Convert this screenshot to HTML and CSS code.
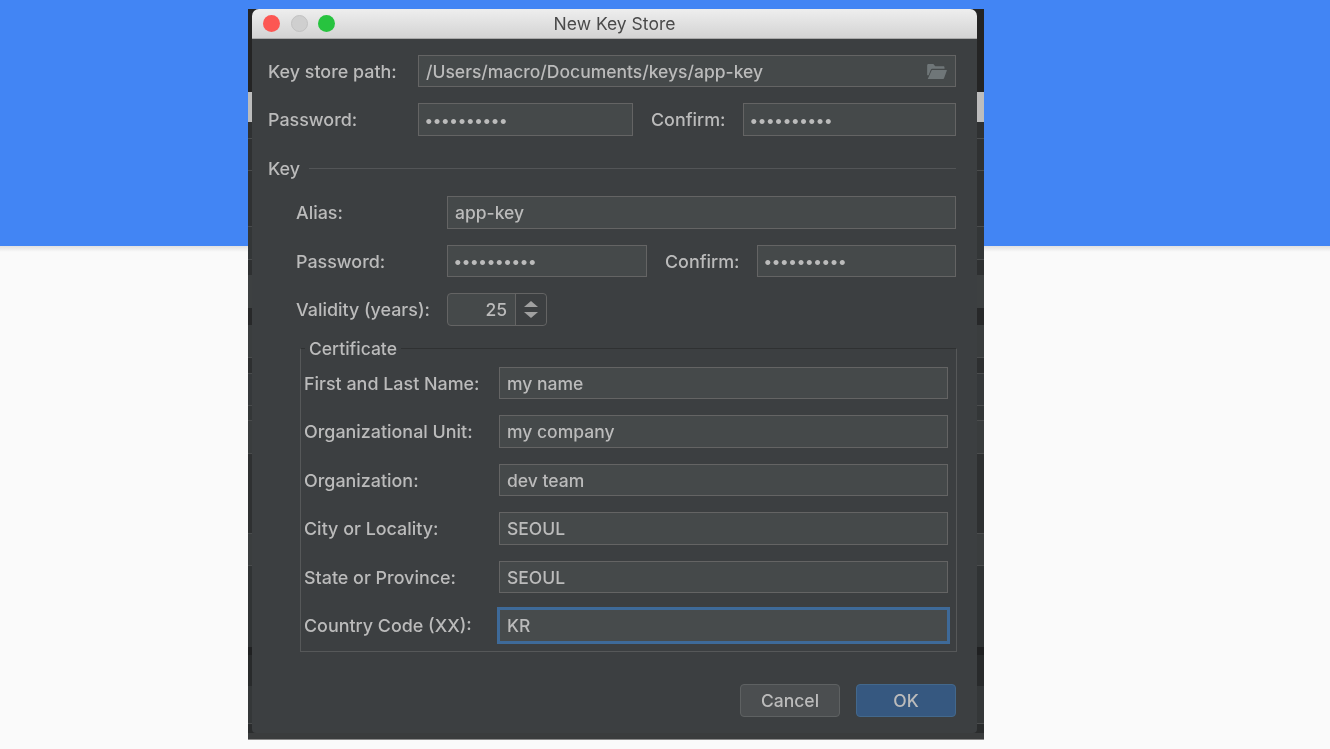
FILE: index.html
```html
<!DOCTYPE html>
<html lang="en">
<head>
    <meta charset="UTF-8">
    <meta name="viewport" content="width=device-width, initial-scale=1.0">
    <title>New Key Store</title>
    <link rel="stylesheet" href="styles.css">
</head>
<body>
    <div class="shot">
        <div class="dialog">
            <div class="titlebar">
                <span class="light red"></span>
                <span class="light grey"></span>
                <span class="light green"></span>
                <span class="title">New Key Store</span>
            </div>

            <div class="content">
                <div class="row store-row">
                    <label>Key store path:</label>
                    <div class="field path-field">
                        <span>/Users/macro/Documents/keys/app-key</span>
                        <svg class="folder" width="20" height="15" viewBox="0 0 21 16">
                            <path d="M0 1.5C0 .7.6 0 1.4 0h5.2l2 2.4h8.6c.8 0 1.3.6 1.3 1.3V5H5.2c-.6 0-1 .3-1.2.8L1.6 12H0z" fill="#6f7678"/>
                            <path d="M5 6.3h15.6c.3 0 .5.3.4.6L18 15.2c-.1.4-.5.8-1 .8H.6z" fill="#6f7678"/>
                        </svg>
                    </div>
                </div>
                <div class="row store-row pass-store">
                    <label>Password:</label>
                    <div class="field dots">••••••••••</div>
                    <label class="confirm">Confirm:</label>
                    <div class="field dots">••••••••••</div>
                </div>

                <div class="key-head">
                    <span>Key</span>
                    <div class="rule"></div>
                </div>

                <div class="key-body">
                    <div class="row key-row">
                        <label>Alias:</label>
                        <div class="field">app-key</div>
                    </div>
                    <div class="row key-row pass-key">
                        <label>Password:</label>
                        <div class="field dots">••••••••••</div>
                        <label class="confirm">Confirm:</label>
                        <div class="field dots">••••••••••</div>
                    </div>
                    <div class="row key-row">
                        <label>Validity (years):</label>
                        <div class="spinner">
                            <div class="spin-value">25</div>
                            <div class="spin-arrows">
                                <span class="arrow-up"></span>
                                <span class="arrow-down"></span>
                            </div>
                        </div>
                    </div>

                    <fieldset class="cert">
                        <legend>Certificate</legend>
                        <div class="row cert-row">
                            <label>First and Last Name:</label>
                            <div class="field">my name</div>
                        </div>
                        <div class="row cert-row">
                            <label>Organizational Unit:</label>
                            <div class="field">my company</div>
                        </div>
                        <div class="row cert-row">
                            <label>Organization:</label>
                            <div class="field">dev team</div>
                        </div>
                        <div class="row cert-row">
                            <label>City or Locality:</label>
                            <div class="field">SEOUL</div>
                        </div>
                        <div class="row cert-row">
                            <label>State or Province:</label>
                            <div class="field">SEOUL</div>
                        </div>
                        <div class="row cert-row">
                            <label>Country Code (XX):</label>
                            <div class="field focused">KR</div>
                        </div>
                    </fieldset>
                </div>

                <div class="buttons">
                    <button class="btn">Cancel</button>
                    <button class="btn btn-ok">OK</button>
                </div>
            </div>
        </div>
    </div>
</body>
</html>
```

FILE: styles.css
```css
*{
   margin:0;
   padding:0;
   box-sizing:border-box;
}
html,body{
   height:100%;
   overflow:hidden;
}
body{
   background:linear-gradient(to bottom,#4285f4 0,#4285f4 246px,#e0e0e0 246px,#fafafa 252px);
   font-family:Inter,"Liberation Sans",sans-serif;
   font-size:17.5px;
   font-weight:500;
   color:#bbbbbb;
   padding-top:9px;
}
label{
   font-size:17.9px;
}

/* the screenshot pasted on the slide, the window behind it shows at the edges.
   stops are y minus 9 because the strip starts at y=9 */
.shot{
   width:736px;
   height:731px;
   margin-left:248px;
   padding-left:4px;
   background:linear-gradient(to bottom,
      #242424 0 83px,
      #bdbdbd 83px 113px,
      #2f3132 113px 129px,#4a4c4d 129px 130px,
      #2f3132 130px 161px,#4a4c4d 161px 162px,
      #2f3132 162px 217px,#4a4c4d 217px 218px,
      #333637 218px 250px,#4a4c4d 250px 251px,
      #2e3031 251px 266px,#3d4041 266px 299px,
      #272829 299px 316px,#3a3d3e 316px 348px,
      #4a4c4d 348px 349px,#2d2f30 349px 364px,
      #4a4c4d 364px 365px,#35383a 365px 396px,
      #4a4c4d 396px 397px,#333637 397px 411px,
      #4a4c4d 411px 412px,#393c3d 412px 444px,
      #4a4c4d 444px 445px,#2e3031 445px 524px,
      #4a4c4d 524px 525px,#3a3d3e 525px 556px,
      #4a4c4d 556px 557px,#303334 557px 638px,
      #1f2021 638px 646px,#282a2b 646px 677px,
      #343738 677px 714px,#4a4c4d 714px 715px,
      #2a2c2d 715px 724px,#3a3c3d 724px 730px,#8a8a8a 730px);
   filter:blur(.5px);
}
.dialog{
   width:725px;
   height:724px;
   background:#3c3f41;
   border-radius:7px 7px 4px 4px;
   display:flex;
   flex-direction:column;
}

.titlebar{
   height:30px;
   flex:none;
   display:flex;
   align-items:center;
   padding-left:11px;
   gap:10.5px;
   position:relative;
   background:linear-gradient(to bottom,#eeeeee,#d3d3d3);
   border-bottom:1px solid #a9a9a9;
   border-radius:7px 7px 0 0;
}
.light{
   width:17px;
   height:17px;
   border-radius:50%;
}
.red{background:#fc5753;}
.grey{background:#cfcfcf;border:1px solid #c2c2c2;}
.green{background:#27c33f;}
.title{
   position:absolute;
   left:0;
   right:0;
   text-align:center;
   font-weight:400;
   color:#4a4a4a;
}

.content{
   flex:1;
   padding:15.9px 21px 0 16px;
   display:flex;
   flex-direction:column;
}
.row{
   display:grid;
   align-items:center;
   height:32.5px;
   margin-bottom:16px;
}
.store-row{grid-template-columns:150px 1fr;}
.pass-store{grid-template-columns:150px 215px 110px 1fr;}
.key-row{grid-template-columns:151px 1fr;}
.pass-key{grid-template-columns:151px 200px 110px 1fr;}
.confirm{padding-left:18px;}

.field{
   height:100%;
   background:#45494a;
   border:1px solid #646464;
   padding-left:7px;
   display:flex;
   align-items:center;
   white-space:nowrap;
}
.path-field{
   justify-content:space-between;
   padding-right:8px;
}
.dots{
   font-size:16px;
   font-weight:700;
   letter-spacing:.7px;
   padding-left:6px;
}
.focused{
   border-color:#3e6a99;
   box-shadow:0 0 0 2px #3e6a99;
   background:#474b4c;
}

.key-head{
   display:flex;
   align-items:center;
   height:20px;
   margin:7px 0 17.5px;
   gap:9px;
   font-size:17.9px;
}
.rule{
   flex:1;
   height:1px;
   background:#535557;
}
.key-body{
   padding-left:28px;
}

.spinner{
   width:100px;
   height:100%;
   display:flex;
   background:#45494a;
   border:1px solid #646464;
   border-radius:4px;
}
.spin-value{
   width:68px;
   text-align:right;
   padding:0 8px 0 0;
   line-height:31px;
   border-right:1px solid #646464;
}
.spin-arrows{
   flex:1;
   background:#3c3f41;
   border-radius:0 4px 4px 0;
   display:flex;
   flex-direction:column;
   align-items:center;
   justify-content:center;
   gap:5px;
}
.arrow-up,.arrow-down{
   width:0;
   height:0;
   border-left:7px solid transparent;
   border-right:7px solid transparent;
}
.arrow-up{border-bottom:6px solid #a0a0a0;}
.arrow-down{border-top:6px solid #a0a0a0;}

.cert{
   width:657px;
   margin:-3px 0 0 4px;
   height:313px;
   border:1px solid #565859;
   border-top-color:#2f3132;
   padding:8px 8px 0 3px;
}
.cert legend{
   margin-left:1px;
   padding:0 4px;
   line-height:20px;
}
.cert-row{grid-template-columns:195px 1fr;}

.buttons{
   display:flex;
   justify-content:flex-end;
   gap:16px;
   margin-top:32px;
}
.btn{
   width:100px;
   height:33px;
   font:inherit;
   color:#bbbbbb;
   background:#4b4e50;
   border:1px solid #5e6162;
   border-radius:4px;
}
.btn-ok{
   background:#365880;
   border-color:#43688c;
}
```
